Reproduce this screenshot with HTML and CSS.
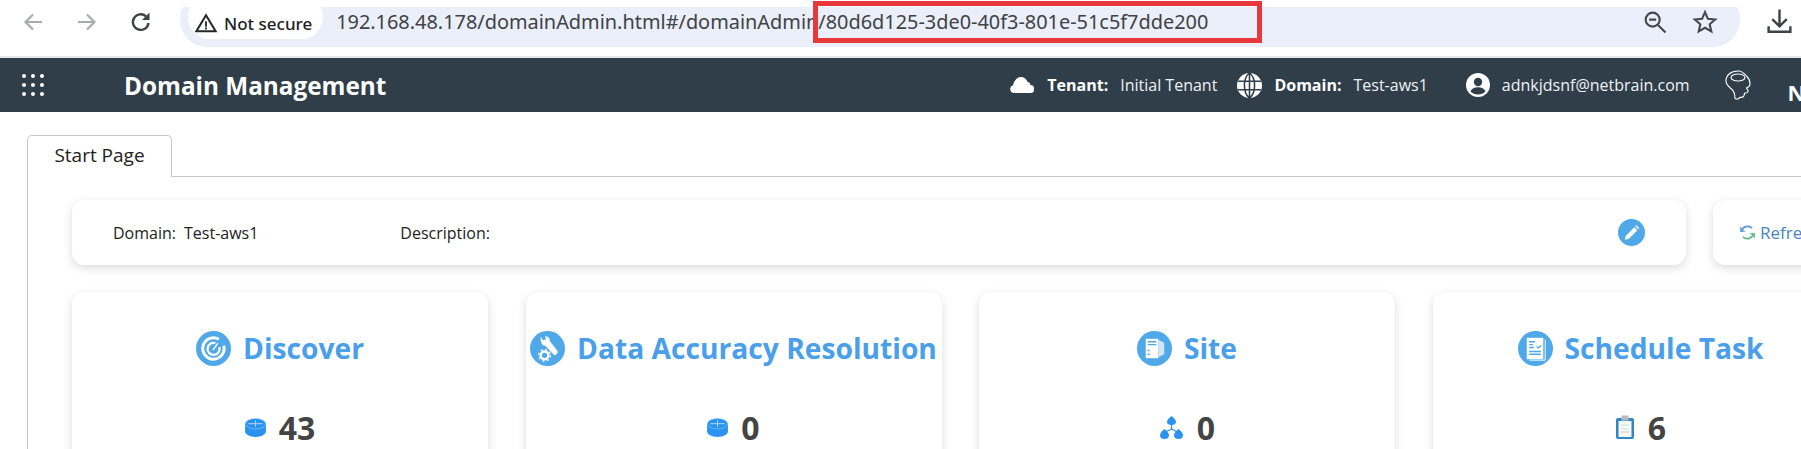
FILE: index.html
```html
<!DOCTYPE html>
<html>
<head>
  <title>Domain Management</title>
  <link rel="stylesheet" href="styles.css">
</head>
<body>
  <!-- browser toolbar -->
  <div class="toolbar">
    <svg class="tool-icon first" viewBox="0 0 24 24"><path d="M21 12H5M12 4.500L4.500 12l7.500 7.500" fill="none" stroke="#a9abad" stroke-width="2.200"/></svg>
    <svg class="tool-icon" viewBox="0 0 24 24"><path d="M3 12h16M12 4.500l7.500 7.500-7.500 7.500" fill="none" stroke="#a9abad" stroke-width="2.200"/></svg>
    <svg class="tool-icon" viewBox="0 0 24 24"><path d="M19.500 13a7.800 7.800 0 1 1-2.500-6.700" fill="none" stroke="#3f4246" stroke-width="2.400"/><path d="M20.500 2.500v7.500H13z" fill="#3f4246"/></svg>
    <div class="omnibox">
      <div class="secure-pill">
        <svg class="warn-icon" viewBox="0 0 24 24"><path d="M12 3.500L22.500 21h-21z" fill="none" stroke="#26282b" stroke-width="2.200"/><path d="M11 10h2v6h-2zM11 17h2v2h-2z" fill="#26282b"/></svg>
        <span>Not secure</span>
      </div>
      <div class="url">192.168.48.178/domainAdmin.html#/domainAdmin/80d6d125-3de0-40f3-801e-51c5f7dde200</div>
      <svg class="omni-icon zoom-icon" viewBox="0 0 24 24"><circle cx="10" cy="10" r="6" fill="none" stroke="#45484c" stroke-width="1.800"/><path d="M7 10h6M14.500 14.500l6.500 6.500" fill="none" stroke="#45484c" stroke-width="1.800"/></svg>
      <svg class="omni-icon" viewBox="0 0 24 24"><path d="M12 3.500l2.500 5.800 6.200.6-4.700 4.100 1.400 6.100L12 17l-5.400 3.100L8 14 3.300 9.900l6.200-.6z" fill="none" stroke="#45484c" stroke-width="1.800"/></svg>
    </div>
    <svg class="download-icon" viewBox="0 0 24 24"><path d="M12 2v13M6 10l6 6 6-6M3 16v4.500h18V16" fill="none" stroke="#3f4246" stroke-width="2"/></svg>
    <div class="red-mark"></div>
  </div>

  <!-- app header -->
  <div class="app-header">
    <svg class="apps-icon" viewBox="0 0 22 22" fill="#fff">
      <circle cx="2" cy="2" r="2"/><circle cx="11" cy="2" r="2"/><circle cx="20" cy="2" r="2"/>
      <circle cx="2" cy="11" r="2"/><circle cx="11" cy="11" r="2"/><circle cx="20" cy="11" r="2"/>
      <circle cx="2" cy="20" r="2"/><circle cx="11" cy="20" r="2"/><circle cx="20" cy="20" r="2"/>
    </svg>
    <div class="app-title">Domain Management</div>
    <div class="header-info">
      <svg class="cloud-icon" viewBox="0 0 24 16"><path d="M4 16a4 4 0 0 1-1-7.800C4 3.500 7 0 11 0c3.500 0 6 2.500 6.800 5.500C19 5 20 6 20.500 8a4 4 0 0 1-.5 8z" fill="#fff"/></svg>
      <b>Tenant:</b><span class="info-value tenant">Initial Tenant</span>
      <svg class="globe-icon" viewBox="0 0 24 24"><circle cx="12" cy="12" r="12" fill="#fff"/><path d="M1 8h22M1 16h22M12 0v24M12 0c-6.500 5-6.500 19 0 24M12 0c6.500 5 6.500 19 0 24" fill="none" stroke="#2f3e49" stroke-width="1.500"/></svg>
      <b>Domain:</b><span class="info-value domain">Test-aws1</span>
      <svg class="user-icon" viewBox="0 0 24 24"><circle cx="12" cy="12" r="12" fill="#fff"/><circle cx="12" cy="9" r="4.200" fill="#2f3e49"/><path d="M4.500 18.500c1.500-3.500 4.500-4.300 7.500-4.300s6 .8 7.500 4.300c-2 2-4.500 3-7.500 3s-5.500-1-7.500-3z" fill="#2f3e49"/></svg>
      <span class="info-value email">adnkjdsnf@netbrain.com</span>
      <svg class="brain-icon" viewBox="0 0 28 30"><path d="M10 28.500c2 1 4 .5 4.500-1 1-.5 2.500.5 4-1 1-1.500.5-2.500 1.500-3.500 2 0 3.500-1 3-2.500l-1.500-2.500c2.500-1 3.500-2 3.500-4 0-3-1-5.500-3-7.500C20 4 17 1 13 1 6 1 1 5 1 11c0 4 3 6 6 8.500 2 2 3 5 3 9z" fill="none" stroke="#fff" stroke-width="1.100"/><ellipse cx="13" cy="7.500" rx="7" ry="3.500" fill="none" stroke="#fff" stroke-width="1.100"/></svg>
      <b class="logo-letter">N</b>
    </div>
  </div>

  <!-- page content -->
  <div class="content">
    <div class="tab-row">
      <div class="tab">Start Page</div>
    </div>
    <div class="tab-body">
      <div class="top-row">
        <div class="card domain-card">
          <span class="field-label">Domain:</span><span class="field-value">Test-aws1</span>
          <span class="field-label desc">Description:</span>
          <span class="edit-btn">
            <svg viewBox="0 0 24 24"><path d="M6 18.500l.8-3.500 7.700-7.700 2.700 2.700-7.700 7.700zM15.300 6.500l1-1 2.700 2.700-1 1z" fill="#fff"/></svg>
          </span>
        </div>
        <div class="card refresh-card">
          <svg class="refresh-icon" viewBox="0 0 18 18"><path d="M2.500 8a6.800 6.800 0 0 1 11.500-3.500" fill="none" stroke="#5b9bd5" stroke-width="1.800"/><path d="M1 2.500v6h6z" fill="#5b9bd5" opacity="0.800"/><path d="M15.500 10a6.800 6.800 0 0 1-11.500 3.500" fill="none" stroke="#5dbb8a" stroke-width="1.800"/><path d="M17 15.500v-6h-6z" fill="#5dbb8a" opacity="0.800"/></svg>
          <span class="refresh-text">Refresh</span>
        </div>
      </div>

      <div class="stat-grid">
        <div class="card stat-card">
          <div class="stat-title">
            <svg class="title-icon" viewBox="0 0 36 36"><circle cx="18" cy="18" r="18" fill="#4fa8e8"/><path d="M23.500 8.500a11 11 0 1 0 5 6.500" fill="none" stroke="#fff" stroke-width="3"/><path d="M20 12.500a6.200 6.200 0 1 0 4 4" fill="none" stroke="#fff" stroke-width="2.400"/><path d="M17.500 19.500l5-7" stroke="#fff" stroke-width="1.500"/></svg>
            <span>Discover</span>
          </div>
          <div class="stat-count">
            <svg class="count-icon" viewBox="0 0 22 20"><path d="M0 6v8c0 3.500 5 6 11 6s11-2.500 11-6V6z" fill="#2a93f2"/><ellipse cx="11" cy="6" rx="10.700" ry="5.500" fill="#2a93f2" stroke="#9fd0f8" stroke-width="0.600"/><path d="M3.500 6h15M11 2.500v7" stroke="#b5dbfa" stroke-width="1"/></svg>
            <span>43</span>
          </div>
        </div>

        <div class="card stat-card">
          <div class="stat-title">
            <svg class="title-icon" viewBox="0 0 36 36"><circle cx="18" cy="18" r="18" fill="#4fa8e8"/><path d="M11 6l2.500 3.500 3-1L15.500 5.500c3 0 5 2 5 5l7.500 9.500c1.500 2.500-1.500 5.500-3.500 4.500l-8.500-9c-3 0-5.500-3-5-9.500z" fill="#fff"/><circle cx="15" cy="25" r="4" fill="none" stroke="#fff" stroke-width="2.500"/><circle cx="15" cy="25" r="6" fill="none" stroke="#fff" stroke-width="1.500" stroke-dasharray="2 2.700"/></svg>
            <span>Data Accuracy Resolution</span>
          </div>
          <div class="stat-count">
            <svg class="count-icon" viewBox="0 0 22 20"><path d="M0 6v8c0 3.500 5 6 11 6s11-2.500 11-6V6z" fill="#2a93f2"/><ellipse cx="11" cy="6" rx="10.700" ry="5.500" fill="#2a93f2" stroke="#9fd0f8" stroke-width="0.600"/><path d="M3.500 6h15M11 2.500v7" stroke="#b5dbfa" stroke-width="1"/></svg>
            <span>0</span>
          </div>
        </div>

        <div class="card stat-card">
          <div class="stat-title">
            <svg class="title-icon" viewBox="0 0 36 36"><circle cx="18" cy="18" r="18" fill="#4fa8e8"/><rect x="9" y="8" width="13" height="20" fill="#fff"/><path d="M22 9l6 3v12l-6 3z" fill="#cfe6f8"/><path d="M11 11h9M11 14h9" stroke="#4fa8e8" stroke-width="1.500"/><path d="M11 20h2M11 24h2" stroke="#4fa8e8" stroke-width="1.500"/></svg>
            <span>Site</span>
          </div>
          <div class="stat-count">
            <svg class="count-icon site" viewBox="0 0 24 23"><path d="M12 0c2 1.500 4.500 3.500 4.500 6 0 2-2 3-4.500 3s-4.500-1-4.500-3c0-2.500 2.500-4.500 4.500-6zM5 13c2 1.500 4.500 3.500 4.500 6.500 0 2.500-2 3.500-4.500 3.500s-4.500-1-4.500-3.500C.5 16.500 3 14.500 5 13zM19 13c2 1.500 4.500 3.500 4.500 6.500 0 2.500-2 3.500-4.500 3.500s-4.500-1-4.500-3.500c0-3 2.500-5 4.500-6.500z" fill="#2a93f2"/><path d="M12 9v4M12 13l-6 3M12 13l6 3" stroke="#2a93f2" stroke-width="1.300" fill="none"/></svg>
            <span>0</span>
          </div>
        </div>

        <div class="card stat-card">
          <div class="stat-title">
            <svg class="title-icon" viewBox="0 0 36 36"><circle cx="18" cy="18" r="18" fill="#4fa8e8"/><rect x="9" y="7" width="17" height="22" fill="#fff"/><path d="M28 9v21H12" fill="none" stroke="#fff" stroke-width="1"/><path d="M11.500 11h6M11.500 14h4M11.500 17h5M11.500 21h12M11.500 24h12" stroke="#4fa8e8" stroke-width="1.500"/><path d="M19 16l2 1.500 3-3" fill="none" stroke="#4fa8e8" stroke-width="1.300"/></svg>
            <span>Schedule Task</span>
          </div>
          <div class="stat-count">
            <svg class="count-icon clip" viewBox="0 0 20 24"><rect x="1" y="3" width="18" height="21" rx="2" fill="#2f86c4"/><rect x="3.500" y="6" width="13" height="16" fill="#f4f8f6"/><rect x="6.500" y="0.500" width="7" height="5" fill="#b9b9b9"/><path d="M6 10h8M6 14h8" stroke="#cfe3d6" stroke-width="1"/><path d="M6 17h8" stroke="#e8bdbd" stroke-width="1"/></svg>
            <span>6</span>
          </div>
        </div>
      </div>
    </div>
  </div>
</body>
</html>
```

FILE: styles.css
```css
html, body {
  margin: 0;
  padding: 0;
  height: 449px;
  overflow: hidden;
  background-color: #fff;
  font-family: "Open Sans", "Noto Sans", sans-serif;
}

/* browser toolbar */
.toolbar {
  position: relative;
  display: flex;
  align-items: flex-start;
  height: 58px;
  padding-top: 7px;
  box-sizing: border-box;
  border-bottom: 2px solid #e6e6e6;
}

.tool-icon {
  width: 24px;
  height: 24px;
  margin-top: 3px;
  margin-right: 30px;
}

.tool-icon.first {
  margin-left: 21px;
}

.omnibox {
  display: flex;
  align-items: flex-start;
  width: 1560px;
  height: 40px;
  margin-left: -3px;
  padding: 0 21px 0 8px;
  box-sizing: border-box;
  background-color: #ebeff9;
  border-radius: 4px 4px 27px 27px / 13px 13px 27px 27px;
}

.secure-pill {
  display: flex;
  align-items: center;
  gap: 7px;
  height: 32px;
  padding: 0 11px 0 7px;
  background-color: #fff;
  border-radius: 4px 4px 24px 24px / 12px 12px 24px 24px;
  font-family: "Noto Sans", sans-serif;
  font-size: 17px;
  font-weight: 500;
  color: #202124;
}

.warn-icon {
  width: 22px;
  height: 22px;
}

.url {
  flex: 1;
  margin-left: 13px;
  line-height: 30px;
  font-family: "Noto Sans", sans-serif;
  font-size: 19.9px;
  color: #3f4246;
  white-space: nowrap;
}

.omni-icon {
  width: 28px;
  height: 28px;
  margin-top: 1px;
}

.zoom-icon {
  margin-right: 22px;
}

.download-icon {
  width: 29px;
  height: 29px;
  margin-left: 25px;
}

.red-mark {
  position: absolute;
  left: 813px;
  top: 1px;
  width: 449px;
  height: 42px;
  box-sizing: border-box;
  border: 5px solid #e8383b;
}

/* app header */
.app-header {
  display: flex;
  align-items: center;
  height: 54px;
  padding-left: 22px;
  background-color: #2f3e49;
  color: #fff;
}

.apps-icon {
  flex: none;
  width: 22px;
  height: 22px;
}

.app-title {
  flex: none;
  margin-left: 80px;
  font-size: 24.3px;
  font-weight: 700;
  white-space: nowrap;
}

.header-info {
  flex: none;
  display: flex;
  align-items: center;
  margin-left: 624px;
  font-size: 16px;
  white-space: nowrap;
}

.header-info b {
  font-weight: 700;
}

.cloud-icon {
  width: 24px;
  height: 16px;
  margin-right: 13px;
}

.info-value {
  margin-left: 12px;
  color: #eef2f5;
}

.info-value.tenant {
  margin-right: 20px;
}

.info-value.domain {
  margin-right: 38px;
}

.info-value.email {
  margin-right: 35px;
}

.globe-icon {
  width: 25px;
  height: 25px;
  margin-right: 12px;
}

.user-icon {
  width: 24px;
  height: 24px;
}

.brain-icon {
  width: 28px;
  height: 30px;
}

.logo-letter {
  margin-left: 35px;
  margin-top: 14px;
  font-size: 22px;
}

/* page content */
.content {
  padding: 23px 0 0 27px;
}

.tab-row {
  display: flex;
  height: 41px;
  border-bottom: 1px solid #c8c8c8;
}

.tab {
  width: 145px;
  height: 42px;
  box-sizing: border-box;
  background-color: #fff;
  border: 1px solid #c8c8c8;
  border-bottom: 0;
  border-radius: 5px 5px 0 0;
  text-align: center;
  line-height: 39px;
  font-size: 19px;
  color: #222;
}

.tab-body {
  padding: 23px 0 0 44px;
  border-left: 1px solid #c8c8c8;
}

.top-row {
  display: flex;
  gap: 27px;
  width: 1900px;
}

.card {
  background-color: #fff;
  border-radius: 12px;
  box-shadow: 0 3px 10px rgba(0, 0, 0, 0.14);
}

.domain-card {
  display: flex;
  align-items: center;
  width: 1614px;
  height: 65px;
  padding: 0 41px 0 41px;
  box-sizing: border-box;
  font-size: 16px;
  color: #222;
}

.field-value {
  margin-left: 8px;
}

.field-label.desc {
  margin-left: 142px;
}

.edit-btn {
  display: flex;
  width: 27px;
  height: 27px;
  margin-left: auto;
  background-color: #4fa8e8;
  border-radius: 50%;
}

.refresh-card {
  display: flex;
  align-items: center;
  width: 200px;
  height: 65px;
  padding-left: 26px;
  box-sizing: border-box;
}

.refresh-icon {
  width: 17px;
  height: 17px;
  margin-right: 4px;
}

.refresh-text {
  font-size: 17px;
  color: #4a86c5;
}

.stat-grid {
  display: grid;
  grid-template-columns: repeat(4, 416px);
  column-gap: 37.5px;
  margin-top: 27px;
}

.stat-card {
  height: 170px;
  padding-top: 38px;
  box-sizing: border-box;
}

.stat-title {
  display: flex;
  justify-content: center;
  align-items: center;
  gap: 12px;
  height: 36px;
  font-size: 28.2px;
  font-weight: 700;
  color: #4a9fea;
  white-space: nowrap;
}

.title-icon {
  width: 35px;
  height: 35px;
}

.stat-count {
  display: flex;
  justify-content: center;
  align-items: center;
  gap: 13px;
  height: 40px;
  margin-top: 41px;
  font-size: 32px;
  font-weight: 700;
  color: #444;
}

.count-icon {
  width: 21px;
  height: 19px;
}

.count-icon.site {
  width: 25px;
  height: 23px;
}

.count-icon.clip {
  width: 20px;
  height: 24px;
}
```
